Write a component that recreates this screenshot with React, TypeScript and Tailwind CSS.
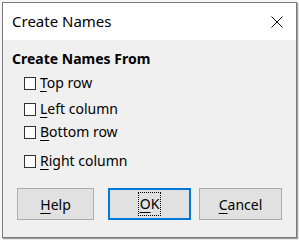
const font = { fontFamily: '"Noto Sans", "Open Sans", sans-serif' };

function Mn({ k, rest }: { k: string; rest: string }) {
  return (
    <span>
      <span className="underline decoration-1 underline-offset-[3px]">{k}</span>
      {rest}
    </span>
  );
}

function Check({ k, rest, className }: { k: string; rest: string; className: string }) {
  return (
    <div className={`flex items-center ${className}`}>
      <div className="w-[12px] h-[13px] border border-[#333] bg-white" />
      <div className="ml-[4px] text-[14px] leading-[18px] text-black">
        <Mn k={k} rest={rest} />
      </div>
    </div>
  );
}

export default function App() {
  return (
    <div className="w-[299px] h-[240px] bg-[#f6f6f6] pl-[2px] pt-[2px]" style={font}>
      <div className="w-[295px] h-[236px] border border-[#7a7a7a] bg-[#f0f0f0] flex flex-col shadow-[1px_1px_1px_rgba(0,0,0,0.35)]">
        <div className="h-[37px] bg-white flex items-center justify-between pl-[9px] pr-[13px]">
          <span className="text-[15px] text-black">Create Names</span>
          <svg width="12" height="12" viewBox="0 0 12 12">
            <path d="M0.5 0.5L11.5 11.5M11.5 0.5L0.5 11.5" stroke="#111" strokeWidth="1" />
          </svg>
        </div>
        <div className="pl-[9px] pt-[9px] text-[14px] font-bold leading-[20px] text-black">
          Create Names From
        </div>
        <div className="pl-[21px] pt-[4px]">
          <Check k="T" rest="op row" className="h-[20px]" />
          <Check k="L" rest="eft column" className="h-[20px] mt-[6px]" />
          <Check k="B" rest="ottom row" className="h-[20px] mt-[3px]" />
          <Check k="R" rest="ight column" className="h-[20px] mt-[9px]" />
        </div>
        <div className="flex pl-[14px] mt-[17px] text-[14px] text-black">
          <button className="w-[77px] h-[32px] border border-[#adadad] bg-[#e1e1e1] flex items-center justify-center">
            <Mn k="H" rest="elp" />
          </button>
          <button className="ml-[14px] w-[83px] h-[32px] border-2 border-[#0078d7] bg-[#e1e1e1] flex items-center justify-center">
            <span className="border border-dotted border-black px-[1px] leading-[22px]">
              <Mn k="O" rest="K" />
            </span>
          </button>
          <button className="ml-[8px] w-[83px] h-[32px] border border-[#adadad] bg-[#e1e1e1] flex items-center justify-center">
            <Mn k="C" rest="ancel" />
          </button>
        </div>
      </div>
    </div>
  );
}
